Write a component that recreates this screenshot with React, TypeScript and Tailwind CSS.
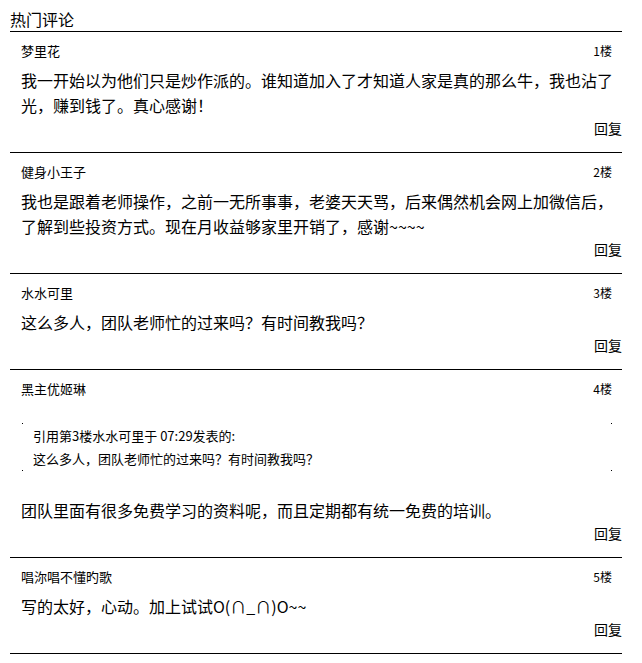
import React from "react";

type Comment = {
  name: string;
  floor: string;
  content: string;
  quote?: { head: string; body: string };
};

const comments: Comment[] = [
  {
    name: "梦里花",
    floor: "1楼",
    content:
      "我一开始以为他们只是炒作派的。谁知道加入了才知道人家是真的那么牛，我也沾了光，赚到钱了。真心感谢！",
  },
  {
    name: "健身小王子",
    floor: "2楼",
    content:
      "我也是跟着老师操作，之前一无所事事，老婆天天骂，后来偶然机会网上加微信后，了解到些投资方式。现在月收益够家里开销了，感谢~~~~",
  },
  {
    name: "水水可里",
    floor: "3楼",
    content: "这么多人，团队老师忙的过来吗？有时间教我吗？",
  },
  {
    name: "黑主优姬琳",
    floor: "4楼",
    quote: {
      head: "引用第3楼水水可里于 07:29发表的:",
      body: "这么多人，团队老师忙的过来吗？有时间教我吗？",
    },
    content: "团队里面有很多免费学习的资料呢，而且定期都有统一免费的培训。",
  },
  {
    name: "唱沵唱不懂旳歌",
    floor: "5楼",
    content: "写的太好，心动。加上试试O(∩_∩)O~~",
  },
];

function Dot({ className }: { className: string }) {
  return <span className={`absolute w-px h-px bg-black ${className}`} />;
}

function QuoteBox({ head, body }: { head: string; body: string }) {
  return (
    <div className="relative mt-[25px] ml-[12px] mr-[10px] h-[48px] pt-[1px] pl-[11px] text-[13px] leading-[23px]">
      <Dot className="left-0 top-0" />
      <Dot className="right-0 top-0" />
      <Dot className="left-0 bottom-0" />
      <Dot className="right-0 bottom-0" />
      <div>{head}</div>
      <div>{body}</div>
    </div>
  );
}

function CommentItem({ c }: { c: Comment }) {
  return (
    <div className="border-b border-black pt-[10px] pb-[14px]">
      <div className="flex justify-between pl-[11px] pr-[10px] leading-[18px]">
        <span className="text-[13px]">{c.name}</span>
        <span className="text-[12px]">{c.floor}</span>
      </div>
      {c.quote && <QuoteBox head={c.quote.head} body={c.quote.body} />}
      <p
        className={`${c.quote ? "mt-[27px]" : "mt-[8px]"} pl-[11px] pr-[2px] text-[16px] leading-[25px]`}
      >
        {c.content}
      </p>
      <div className="text-right text-[14px] leading-[20px]">回复</div>
    </div>
  );
}

export default function App() {
  return (
    <div
      className="min-h-[663px] bg-white text-black"
      style={{ fontFamily: '"Noto Sans CJK SC", "Liberation Sans", sans-serif' }}
    >
      <div className="mx-[10px] w-[612px]">
        <h2 className="border-b border-black pt-[9px] pb-[2px] text-[16px] leading-[20px] font-normal">
          热门评论
        </h2>
        {comments.map((c) => (
          <CommentItem key={c.floor} c={c} />
        ))}
      </div>
    </div>
  );
}
